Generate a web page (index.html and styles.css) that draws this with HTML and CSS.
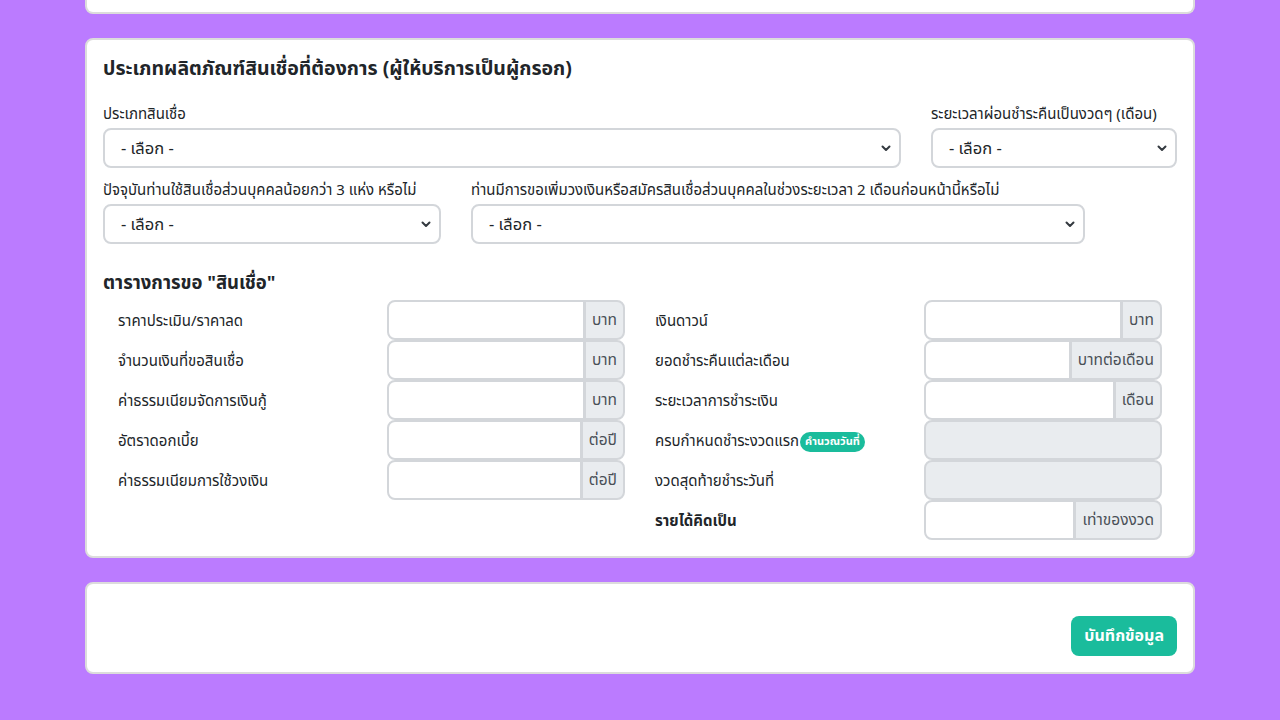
FILE: index.html
```html
<!DOCTYPE html>
<html lang="th">
<head>
<meta charset="utf-8">
<title>สินเชื่อ</title>
<link rel="stylesheet" href="styles.css">
</head>
<body>
<div class="page">
  <div class="card card-top"></div>

  <div class="card card-main">
    <h2 class="title">ประเภทผลิตภัณฑ์สินเชื่อที่ต้องการ (ผู้ให้บริการเป็นผู้กรอก)</h2>

    <div class="row">
      <div class="field f-wide">
        <label class="lbl">ประเภทสินเชื่อ</label>
        <div class="sel-wrap">
          <select class="sel"><option>- เลือก -</option></select>
          <svg class="chev" width="10" height="7" viewBox="0 0 10 7"><path d="M1.5 1.5l3.5 3.5 3.5-3.5" fill="none" stroke="#343a40" stroke-width="2" stroke-linecap="round" stroke-linejoin="round"/></svg>
        </div>
      </div>
      <div class="field f-narrow">
        <label class="lbl">ระยะเวลาผ่อนชำระคืนเป็นงวดๆ (เดือน)</label>
        <div class="sel-wrap">
          <select class="sel"><option>- เลือก -</option></select>
          <svg class="chev" width="10" height="7" viewBox="0 0 10 7"><path d="M1.5 1.5l3.5 3.5 3.5-3.5" fill="none" stroke="#343a40" stroke-width="2" stroke-linecap="round" stroke-linejoin="round"/></svg>
        </div>
      </div>
    </div>

    <div class="row">
      <div class="field f-4">
        <label class="lbl">ปัจจุบันท่านใช้สินเชื่อส่วนบุคคลน้อยกว่า 3 แห่ง หรือไม่</label>
        <div class="sel-wrap">
          <select class="sel"><option>- เลือก -</option></select>
          <svg class="chev" width="10" height="7" viewBox="0 0 10 7"><path d="M1.5 1.5l3.5 3.5 3.5-3.5" fill="none" stroke="#343a40" stroke-width="2" stroke-linecap="round" stroke-linejoin="round"/></svg>
        </div>
      </div>
      <div class="field f-7">
        <label class="lbl">ท่านมีการขอเพิ่มวงเงินหรือสมัครสินเชื่อส่วนบุคคลในช่วงระยะเวลา 2 เดือนก่อนหน้านี้หรือไม่</label>
        <div class="sel-wrap">
          <select class="sel"><option>- เลือก -</option></select>
          <svg class="chev" width="10" height="7" viewBox="0 0 10 7"><path d="M1.5 1.5l3.5 3.5 3.5-3.5" fill="none" stroke="#343a40" stroke-width="2" stroke-linecap="round" stroke-linejoin="round"/></svg>
        </div>
      </div>
    </div>

    <h3 class="subtitle">ตารางการขอ "สินเชื่อ"</h3>

    <div class="table">
      <div class="col col-left">
        <div class="trow"><span class="tl">ราคาประเมิน/ราคาลด</span><div class="ig"><input class="ip"><span class="add">บาท</span></div></div>
        <div class="trow"><span class="tl">จำนวนเงินที่ขอสินเชื่อ</span><div class="ig"><input class="ip"><span class="add">บาท</span></div></div>
        <div class="trow"><span class="tl">ค่าธรรมเนียมจัดการเงินกู้</span><div class="ig"><input class="ip"><span class="add">บาท</span></div></div>
        <div class="trow"><span class="tl">อัตราดอกเบี้ย</span><div class="ig"><input class="ip"><span class="add">ต่อปี</span></div></div>
        <div class="trow"><span class="tl">ค่าธรรมเนียมการใช้วงเงิน</span><div class="ig"><input class="ip"><span class="add">ต่อปี</span></div></div>
      </div>
      <div class="col col-right">
        <div class="trow"><span class="tl">เงินดาวน์</span><div class="ig"><input class="ip"><span class="add">บาท</span></div></div>
        <div class="trow"><span class="tl">ยอดชำระคืนแต่ละเดือน</span><div class="ig"><input class="ip"><span class="add">บาทต่อเดือน</span></div></div>
        <div class="trow"><span class="tl">ระยะเวลาการชำระเงิน</span><div class="ig"><input class="ip"><span class="add">เดือน</span></div></div>
        <div class="trow"><span class="tl">ครบกำหนดชำระงวดแรก<span class="badge">คำนวณวันที่</span></span><div class="ig"><input class="ip ro" readonly></div></div>
        <div class="trow"><span class="tl">งวดสุดท้ายชำระวันที่</span><div class="ig"><input class="ip ro" readonly></div></div>
        <div class="trow"><span class="tl strong">รายได้คิดเป็น</span><div class="ig"><input class="ip"><span class="add">เท่าของงวด</span></div></div>
      </div>
    </div>
  </div>

  <div class="card card-foot">
    <button class="btn">บันทึกข้อมูล</button>
  </div>
</div>
</body>
</html>
```

FILE: styles.css
```css
* { box-sizing: border-box; }
html, body { margin: 0; padding: 0; }
body {
  background: #bb7bff;
  font-family: "Noto Sans Thai", "Noto Sans Thai UI", "Noto Sans", "DejaVu Sans", sans-serif;
  color: #212529;
  font-size: 15px;
  height: 720px;
  overflow: hidden;
}
.page {
  width: 1110px;
  margin: 0 auto;
  display: flex;
  flex-direction: column;
  gap: 24px;
}
.card {
  background: #fff;
  border: 2px solid #dcdcdc;
  border-radius: 8px;
}
.card-top {
  height: 14px;
  border-top: none;
  border-radius: 0 0 8px 8px;
}
.card-main {
  padding: 14px 16px 16px 16px;
  height: 520px;
}
.title {
  margin: 0 0 21px 0;
  font-size: 19.5px;
  font-weight: 700;
  line-height: 30px;
}
.row {
  display: flex;
  gap: 30px;
  margin-bottom: 13px;
}
.field { display: flex; flex-direction: column; }
.f-wide { width: 798px; }
.f-narrow { width: 246px; }
.f-4 { width: 338px; }
.f-7 { width: 614px; }
.lbl {
  font-size: 15px;
  line-height: 20px;
  height: 20px;
  margin-bottom: 3px;
  white-space: nowrap;
}
.sel-wrap { position: relative; }
.sel {
  appearance: none;
  -webkit-appearance: none;
  width: 100%;
  height: 40px;
  border: 2px solid #d3d6da;
  border-radius: 8px;
  background: #fff;
  padding: 0 36px 0 16px;
  font-family: inherit;
  font-size: 16.5px;
  color: #212529;
}
.chev {
  position: absolute;
  right: 10px;
  top: 17px;
  pointer-events: none;
}
.subtitle {
  margin: 26px 0 4px 0;
  font-size: 18.5px;
  font-weight: 700;
  line-height: 26px;
}
.table {
  display: flex;
  gap: 30px;
}
.col { width: 522px; display: flex; flex-direction: column; }
.col-left { padding-left: 15px; }
.col-right { padding-right: 15px; }
.trow {
  display: flex;
  align-items: center;
  height: 40px;
}
.tl {
  width: 269px;
  font-size: 15px;
  white-space: nowrap;
  display: flex;
  align-items: center;
  padding-top: 3px;
}
.strong { font-weight: 700; }
.badge {
  background: #1abc9c;
  color: #fff;
  font-size: 11px;
  font-weight: 700;
  border-radius: 10px;
  padding: 3px 5px;
  line-height: 14px;
  margin-left: 1px;
}
.ig {
  display: flex;
  width: 238px;
  height: 40px;
}
.ip {
  flex: 1;
  min-width: 0;
  height: 40px;
  border: 2px solid #d3d6da;
  border-radius: 8px 0 0 8px;
  background: #fff;
  font-family: inherit;
  font-size: 15px;
  padding: 0 12px;
}
.ip.ro {
  border-radius: 8px;
  background: #e9ecef;
}
.add {
  display: flex;
  align-items: center;
  padding: 0 6px;
  background: #e9ecef;
  border: 2px solid #d3d6da;
  border-left: 1px solid #d3d6da;
  border-radius: 0 8px 8px 0;
  color: #495057;
  font-size: 15.5px;
  white-space: nowrap;
}
.card-foot {
  height: 92px;
  display: flex;
  justify-content: flex-end;
  align-items: flex-end;
  padding: 0 16px 16px 16px;
}
.btn {
  background: #1abc9c;
  color: #fff;
  border: none;
  border-radius: 8px;
  height: 40px;
  padding: 0 13px;
  font-family: inherit;
  font-size: 16px;
  font-weight: 700;
}
```
